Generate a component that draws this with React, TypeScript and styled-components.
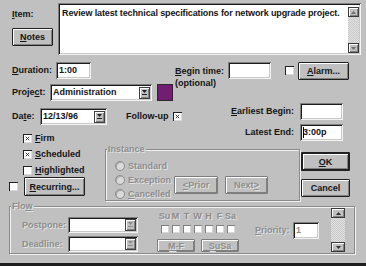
import React from "react";
import styled, { createGlobalStyle, css } from "styled-components";

const GlobalStyle = createGlobalStyle`
  html, body { margin: 0; padding: 0; background: #c0c0c0; }
  body { font-family: "Liberation Sans", Arial, sans-serif; }
`;

const dimText = css`
  color: #8c8c8c;
  text-shadow: 1px 1px #e4e4e4;
`;

const sunken = css`
  background: #fff;
  box-shadow: inset 1px 1px #808080, inset -1px -1px #f4f4f4, inset 2px 2px #1c1c1c, inset -2px -2px #c8c8c8;
`;

const Dialog = styled.div`
  width: 366px;
  height: 266px;
  box-sizing: border-box;
  padding: 3px 5px 0 6px;
  background: #c0c0c0;
  border-bottom: 3px solid #1e1e1e;
  font-size: 9px;
  font-weight: 700;
  color: #141414;
  display: flex;
  flex-direction: column;
  overflow: hidden;
  u { text-underline-offset: 1px; }
`;

const Label = styled.span<{ $w?: number; $dim?: boolean }>`
  display: inline-block;
  flex: none;
  line-height: 11px;
  white-space: nowrap;
  ${p => (p.$w ? `width: ${p.$w}px;` : "")}
  ${p => (p.$dim ? dimText : "")}
`;

const Button = styled.button<{ $w: number; $h: number; $default?: boolean; $dim?: boolean }>`
  flex: none;
  width: ${p => p.$w}px;
  height: ${p => p.$h}px;
  padding: 0;
  margin: 0;
  font: inherit;
  color: #141414;
  background: #c0c0c0;
  border: ${p => (p.$default ? 2 : 1)}px solid ${p => (p.$dim ? "#7c7c7c" : "#202020")};
  border-radius: 1px;
  box-shadow: inset 1px 1px #fff, inset -1px -1px #808080;
  ${p => (p.$dim ? dimText : "")}
`;

const Field = styled.div<{ $w: number; $h: number }>`
  ${sunken};
  flex: none;
  width: ${p => p.$w}px;
  height: ${p => p.$h}px;
  box-sizing: border-box;
  padding: 0 3px;
  display: flex;
  align-items: center;
  font-size: 9px;
  line-height: 11px;
`;

const FieldText = styled.span<{ $dim?: boolean }>`
  ${p => (p.$dim ? "color: #8c8c8c;" : "")}
`;

const Caret = styled.span`
  display: inline-block;
  width: 1px;
  height: 11px;
  margin-right: -1px;
  background: #000;
  vertical-align: middle;
`;

const ComboBox = styled(Field)`
  padding: 0 2px 0 3px;
  justify-content: space-between;
`;

const DropButton = styled.span`
  flex: none;
  width: 11px;
  height: 12px;
  box-sizing: border-box;
  background: #c0c0c0;
  border: 1px solid #404040;
  box-shadow: inset 1px 1px #fff, inset -1px -1px #808080;
  display: flex;
  align-items: center;
  justify-content: center;
  svg { display: block; }
`;

const Swatch = styled.div`
  flex: none;
  width: 16px;
  height: 17px;
  margin-left: 5px;
  box-sizing: border-box;
  background: #721d72;
  border: 1px solid #2a2a2a;
`;

const CheckBox = styled.span<{ $dim?: boolean; $size?: number }>`
  flex: none;
  width: ${p => p.$size ?? 9}px;
  height: ${p => p.$size ?? 9}px;
  box-sizing: border-box;
  background: #fff;
  box-shadow: inset 1px 1px ${p => (p.$dim ? "#808080" : "#202020")}, inset -1px -1px #d8d8d8;
  display: flex;
  align-items: center;
  justify-content: center;
  svg { display: block; }
`;

const Radio = styled.span`
  flex: none;
  width: 8px;
  height: 8px;
  border-radius: 50%;
  border: 1px solid #8c8c8c;
  background: #dadada;
  box-shadow: inset 1px 1px #a8a8a8;
`;

const Row = styled.div<{ $mt?: number; $h?: number; $pl?: number; $gap?: number }>`
  display: flex;
  align-items: center;
  flex: none;
  margin-top: ${p => p.$mt ?? 0}px;
  ${p => (p.$h ? `height: ${p.$h}px;` : "")}
  padding-left: ${p => p.$pl ?? 0}px;
  gap: ${p => p.$gap ?? 0}px;
`;

const Stack = styled.div<{ $w?: number; $mt?: number; $pl?: number; $ml?: number }>`
  display: flex;
  flex-direction: column;
  flex: none;
  ${p => (p.$w ? `width: ${p.$w}px;` : "")}
  margin-top: ${p => p.$mt ?? 0}px;
  margin-left: ${p => p.$ml ?? 0}px;
  padding-left: ${p => p.$pl ?? 0}px;
  box-sizing: border-box;
`;

/* memo */
const MemoRow = styled.div`
  display: flex;
  height: 52px;
  flex: none;
`;

const MemoSide = styled.div`
  width: 52px;
  padding-left: 6px;
  box-sizing: border-box;
  display: flex;
  flex-direction: column;
  align-items: flex-start;
`;

const Memo = styled.div`
  ${sunken};
  width: 303px;
  height: 52px;
  box-sizing: border-box;
  padding: 4px 2px 2px 2px;
  display: flex;
`;

const MemoText = styled.div`
  flex: 1;
  padding: 1px 2px;
  line-height: 11px;
  letter-spacing: -0.12px;
  white-space: nowrap;
  overflow: hidden;
`;

const ScrollBar = styled.div<{ $w: number }>`
  flex: none;
  width: ${p => p.$w}px;
  display: flex;
  flex-direction: column;
  background: repeating-conic-gradient(#c8c8c8 0 25%, #e2e2e2 0 50%) 0 0 / 2px 2px;
`;

const ScrollArrow = styled.div`
  height: 10px;
  box-sizing: border-box;
  background: #c0c0c0;
  border: 1px solid #3a3a3a;
  box-shadow: inset 1px 1px #fff, inset -1px -1px #808080;
  display: flex;
  align-items: center;
  justify-content: center;
  svg { display: block; }
`;

const Track = styled.div`
  flex: 1;
`;

/* group boxes */
const Group = styled.fieldset<{ $w: number; $h: number; $ml?: number }>`
  flex: none;
  width: ${p => p.$w}px;
  height: ${p => p.$h}px;
  margin: 0 0 0 ${p => p.$ml ?? 0}px;
  padding: 0;
  box-sizing: border-box;
  min-width: 0;
  border: 1px solid #8a8a8a;
  box-shadow: inset 1px 1px #f2f2f2, 1px 1px #f2f2f2;
  display: flex;
`;

const Legend = styled.legend`
  margin-left: 1px;
  padding: 0 1px;
  line-height: 10px;
  background: #c0c0c0;
  ${dimText};
`;

const DayGrid = styled.div`
  display: grid;
  grid-template-columns: repeat(7, 11px);
  justify-items: center;
  align-items: center;
`;

const DayName = styled.span`
  line-height: 10px;
  ${dimText};
`;

function Arrow({ up, color = "#303030" }: { up?: boolean; color?: string }) {
  return (
    <svg width="5" height="3" viewBox="0 0 5 3">
      <path d={up ? "M0 3 L2.5 0 L5 3 Z" : "M0 0 L5 0 L2.5 3 Z"} fill={color} />
    </svg>
  );
}

function ComboArrow({ dim }: { dim?: boolean }) {
  const c = dim ? "#8a8a8a" : "#202020";
  return (
    <svg width="5" height="6" viewBox="0 0 5 6">
      <path d="M0 0 L5 0 L2.5 3 Z" fill={c} />
      <rect x="0" y="4" width="5" height="1" fill={c} />
    </svg>
  );
}

function Check({ checked, dim, size }: { checked?: boolean; dim?: boolean; size?: number }) {
  return (
    <CheckBox $dim={dim} $size={size}>
      {checked && (
        <svg width="5" height="5" viewBox="0 0 5 5">
          <path d="M0.8 0.8 L4.2 4.2 M4.2 0.8 L0.8 4.2" stroke="#303030" strokeWidth="1" />
        </svg>
      )}
    </CheckBox>
  );
}

function Combo({ w, h, value, dim }: { w: number; h: number; value?: string; dim?: boolean }) {
  return (
    <ComboBox $w={w} $h={h}>
      <FieldText>{value}</FieldText>
      <DropButton>
        <ComboArrow dim={dim} />
      </DropButton>
    </ComboBox>
  );
}

export default function App() {
  return (
    <Dialog>
      <GlobalStyle />
      <MemoRow>
        <MemoSide>
          <Label style={{ marginTop: 6 }}>
            <u>I</u>tem:
          </Label>
          <Button $w={41} $h={18} style={{ marginTop: 8 }}>
            <u>N</u>otes
          </Button>
        </MemoSide>
        <Memo>
          <MemoText>Review latest technical specifications for network upgrade project.</MemoText>
          <ScrollBar $w={11}>
            <ScrollArrow>
              <Arrow up color="#707070" />
            </ScrollArrow>
            <Track />
            <ScrollArrow>
              <Arrow color="#707070" />
            </ScrollArrow>
          </ScrollBar>
        </Memo>
      </MemoRow>

      <Row $mt={7} style={{ alignItems: "flex-start" }}>
        <Stack $w={169} $pl={6}>
          <Row $h={17}>
            <Label $w={44}>
              <u>D</u>uration:
            </Label>
            <Field $w={35} $h={17}>
              1:00
            </Field>
          </Row>
          <Row $h={17} $mt={5}>
            <Label $w={38}>
              Proje<u>c</u>t:
            </Label>
            <Combo w={102} h={17} value="Administration" />
            <Swatch />
          </Row>
        </Stack>
        <Label $w={53} style={{ marginTop: 3, lineHeight: "12px" }}>
          <u>B</u>egin time:
          <br />
          (optional)
        </Label>
        <Field $w={43} $h={17} />
        <Row $h={17} style={{ marginLeft: 14 }}>
          <Check />
        </Row>
        <Button $w={51} $h={18} style={{ marginLeft: 4 }}>
          <u>A</u>larm...
        </Button>
      </Row>

      <Row $mt={2} style={{ alignItems: "flex-start" }}>
        <Stack $pl={6}>
          <Row $mt={5} $h={17}>
            <Label $w={28}>
              Da<u>t</u>e:
            </Label>
            <Combo w={67} h={17} value="12/13/96" />
            <Label style={{ marginLeft: 19 }}>Follow-up</Label>
            <span style={{ marginLeft: 4, display: "flex" }}>
              <Check checked />
            </span>
          </Row>
          <Row $mt={7} $h={12} $pl={11} $gap={3}>
            <Check checked />
            <Label>
              <u>F</u>irm
            </Label>
          </Row>
        </Stack>
        <Stack style={{ marginLeft: "auto", marginRight: 18, alignItems: "flex-end" }}>
          <Row $gap={6}>
            <Label>
              <u>E</u>arliest Begin:
            </Label>
            <Field $w={43} $h={17} />
          </Row>
          <Row $gap={6} $mt={4}>
            <Label>Latest End:</Label>
            <Field $w={43} $h={17}>
              <Caret />
              3:00p
            </Field>
          </Row>
        </Stack>
      </Row>

      <Row style={{ alignItems: "flex-start", height: 57 }}>
        <Stack $w={99}>
          <Row $mt={3} $h={14} $pl={17} $gap={3}>
            <Check checked />
            <Label>
              <u>S</u>cheduled
            </Label>
          </Row>
          <Row $mt={2} $h={14} $pl={17} $gap={3}>
            <Check />
            <Label>
              <u>H</u>ighlighted
            </Label>
          </Row>
          <Row $h={19} $pl={3} $gap={6}>
            <Check />
            <Button $w={61} $h={19}>
              <u>R</u>ecurring...
            </Button>
          </Row>
        </Stack>
        <Group $w={195} $h={57}>
          <Legend>Instance</Legend>
          <Stack $w={68} $pl={9} $mt={5}>
            {["Standard", "Exception", "Cancelled"].map((t, i) => (
              <Row key={t} $h={14} $gap={3}>
                <Radio />
                <Label $dim>{i === 2 ? <><u>C</u>ancelled</> : t}</Label>
              </Row>
            ))}
          </Stack>
          <Row $mt={22} $gap={7} style={{ alignSelf: "flex-start" }}>
            <Button $w={44} $h={18} $dim>
              <u>&lt;</u>Prior
            </Button>
            <Button $w={43} $h={18} $dim>
              Next<u>&gt;</u>
            </Button>
          </Row>
        </Group>
        <Stack $ml={1} $mt={8}>
          <Button $w={49} $h={19} $default>
            <u>O</u>K
          </Button>
          <Button $w={49} $h={18} style={{ marginTop: 8 }}>
            Cancel
          </Button>
        </Stack>
      </Row>

      <Row style={{ alignItems: "flex-start" }}>
        <Group $w={346} $h={53} $ml={3}>
          <Legend>
            Flo<u>w</u>
          </Legend>
          <Stack $pl={12}>
            <Row $mt={6} $h={16}>
              <Label $w={46} $dim>
                Postpone:
              </Label>
              <Combo w={70} h={16} dim />
            </Row>
            <Row $mt={3} $h={16}>
              <Label $w={46} $dim>
                Deadline:
              </Label>
              <Combo w={70} h={16} dim />
            </Row>
          </Stack>
          <Stack $ml={19}>
            <DayGrid style={{ marginLeft: 2 }}>
              {["Su", "M", "T", "W", "H", "F", "Sa"].map(d => (
                <DayName key={d}>{d}</DayName>
              ))}
            </DayGrid>
            <DayGrid style={{ marginLeft: 2, marginTop: 4 }}>
              {[0, 1, 2, 3, 4, 5, 6].map(i => (
                <Check key={i} dim size={8} />
              ))}
            </DayGrid>
            <Row $mt={6} $gap={6}>
              <Button $w={38} $h={13} $dim>
                <u>M</u>-F
              </Button>
              <Button $w={38} $h={13} $dim>
                <u>S</u>uSa
              </Button>
            </Row>
          </Stack>
          <Row $mt={11} style={{ marginLeft: 16, alignSelf: "flex-start" }}>
            <Label $w={38} $dim>
              <u>P</u>riority:
            </Label>
            <Field $w={26} $h={17}>
              <FieldText $dim>1</FieldText>
            </Field>
          </Row>
          <ScrollBar $w={14} style={{ marginLeft: 12, marginTop: -3, height: 44 }}>
            <ScrollArrow>
              <Arrow up />
            </ScrollArrow>
            <Track />
            <ScrollArrow>
              <Arrow />
            </ScrollArrow>
          </ScrollBar>
        </Group>
      </Row>
    </Dialog>
  );
}
